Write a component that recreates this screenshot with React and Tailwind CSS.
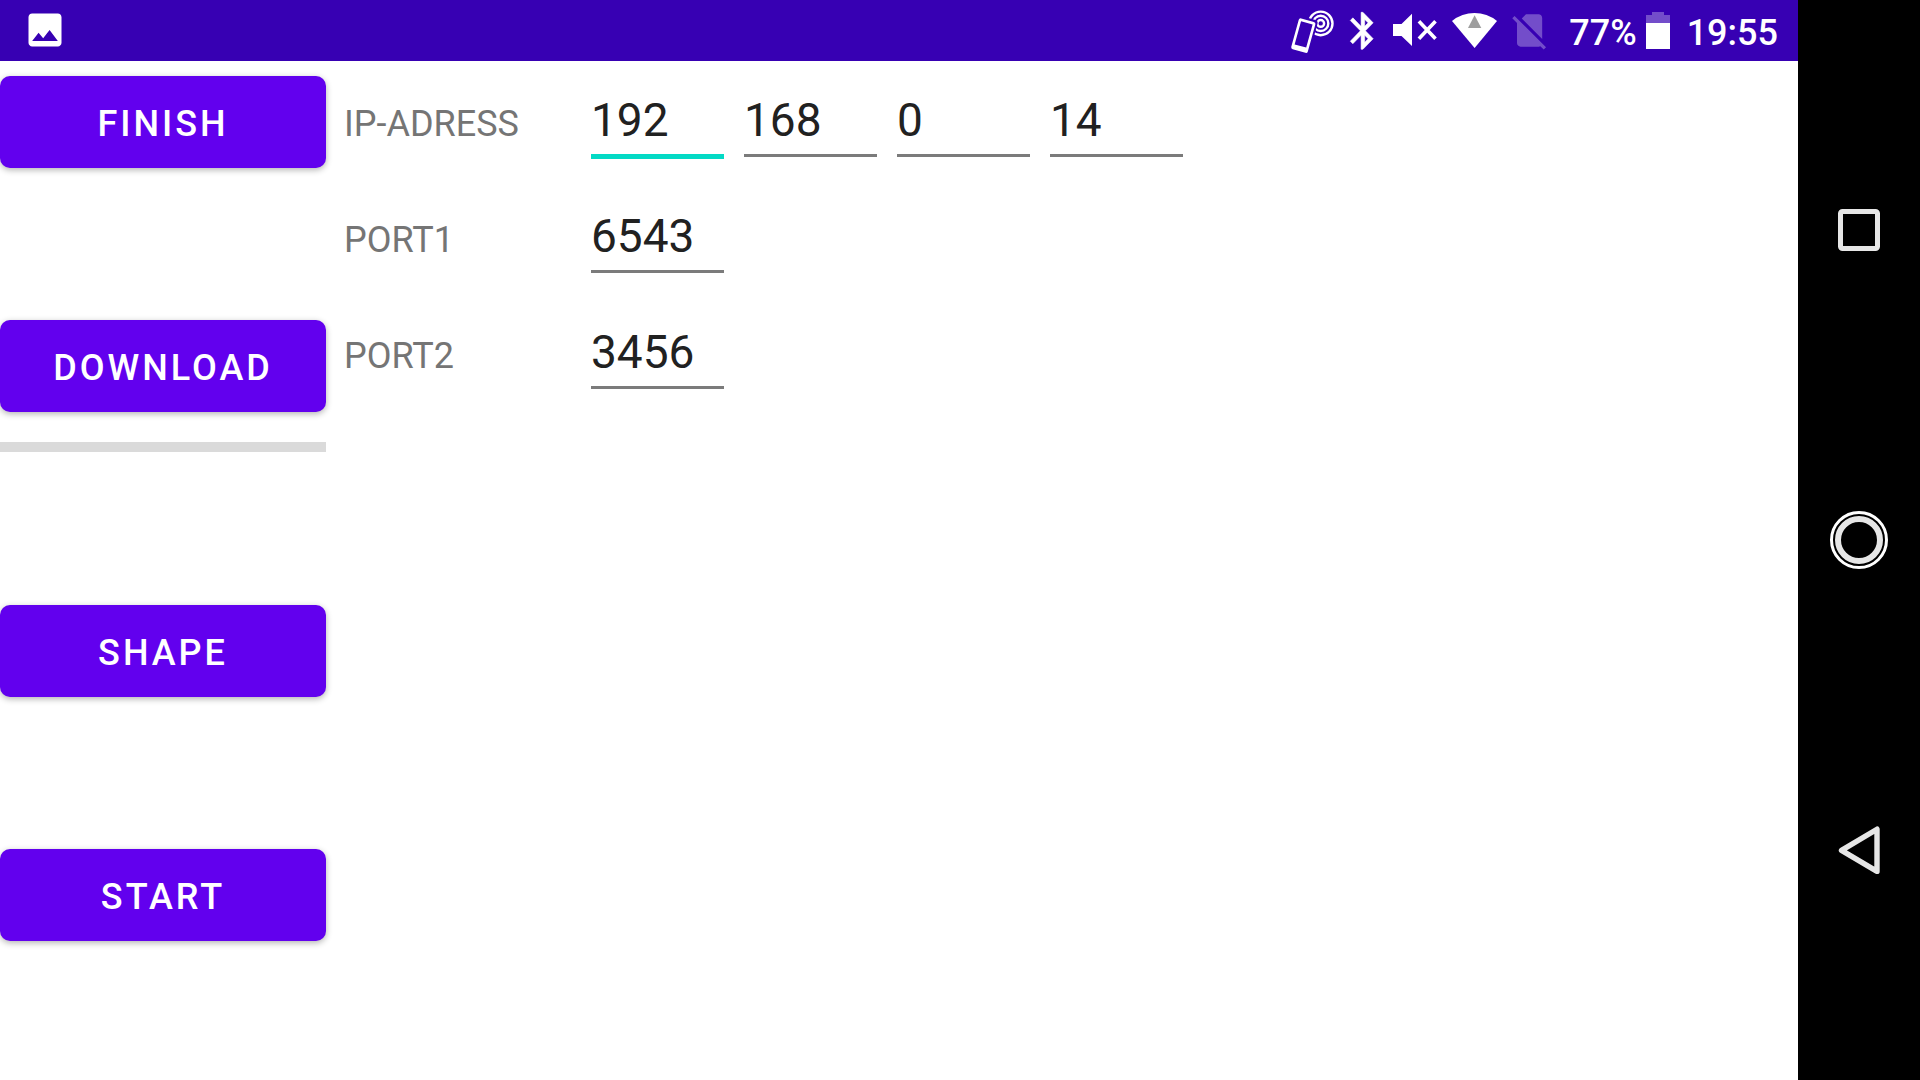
import React, { useState } from "react";

function StatusIcon({ className, children }) {
  return (
    <svg
      aria-hidden="true"
      fill="currentColor"
      className={`h-12 shrink-0 ${className}`}
    >
      {children}
    </svg>
  );
}

function StatusBar() {
  return (
    <header className="flex h-[61px] items-start bg-[#3700b3] pt-[6px] pr-5 pl-[23px] text-white">
      <svg
        aria-hidden="true"
        viewBox="0 0 24 24"
        fill="currentColor"
        className="mt-[2px] size-[44px]"
      >
        <path d="M21 19V5c0-1.1-.9-2-2-2H5c-1.1 0-2 .9-2 2v14c0 1.1.9 2 2 2h14c1.1 0 2-.9 2-2zM8.5 13.5l2.5 3.01L14.5 12l4.5 6H5l3.5-4.5z" />
      </svg>

      <div className="ml-auto flex items-start gap-3">
        {/* Phone with NFC waves */}
        <StatusIcon className="w-12">
          <g fill="none" stroke="currentColor" strokeWidth="2.4">
            <circle cx="31.7" cy="17.4" r="11.8" />
            <circle cx="31.7" cy="17.4" r="7.6" />
            <circle cx="31.7" cy="17.4" r="3.4" />
          </g>
          <g transform="rotate(15.5 14.3 29.6)">
            <rect x="4" y="11.4" width="20.8" height="36" rx="3" fill="#3700b3" />
            <path
              fillRule="evenodd"
              d="M7.7 13.6h13.2a2 2 0 0 1 2 2v28a2 2 0 0 1-2 2H7.7a2 2 0 0 1-2-2v-28a2 2 0 0 1 2-2zM8.3 16.4v24h12v-24z"
            />
          </g>
        </StatusIcon>
        {/* Bluetooth */}
        <StatusIcon className="w-[30px]">
          <path
            transform="translate(-7.7 2.6) scale(1.8 1.85)"
            d="M17.71 7.71L12 2h-1v7.59L6.41 5 5 6.41 10.59 12 5 17.59 6.41 19 11 14.41V22h1l5.71-5.71-4.3-4.29 4.3-4.29zM13 5.83l1.88 1.88L13 9.59V5.83zm1.88 10.46L13 18.17v-3.76l1.88 1.88z"
            stroke="currentColor"
            strokeWidth="0.3"
          />
        </StatusIcon>
        {/* Muted */}
        <StatusIcon className="w-12">
          <path d="M2 18h8.5L21 7.7V40L10.5 30H2z" />
          <path
            d="M27.9 15.2l16.6 17.6M44.5 15.2L27.9 32.8"
            stroke="currentColor"
            strokeWidth="3.6"
          />
        </StatusIcon>
        {/* Wi-Fi */}
        <StatusIcon className="w-12">
          <path d="M23.6 42L1 15a35.6 35.6 0 0 1 45 0z" />
          <path d="M23.6 9.3L17 22h13.3z" fill="#9e9e9e" />
        </StatusIcon>
        {/* No SIM */}
        <StatusIcon className="w-9 opacity-30">
          <path
            transform="translate(-3 2.9) scale(1.8)"
            d="M18.99 5c0-1.1-.89-2-1.99-2h-7L7.66 5.34 19 16.68 18.99 5zM3.65 3.88L2.38 5.15 5 7.77V19c0 1.1.9 2 2 2h10.01c.35 0 .67-.1.96-.26l1.88 1.88 1.27-1.27L3.65 3.88z"
          />
        </StatusIcon>

        <span className="ml-[10px] pt-[5px] text-[36px] leading-[44px] font-medium">
          77%
        </span>
        {/* Battery */}
        <StatusIcon className="-ml-[3px] w-6">
          <path d="M6 6h12v3h6v8H0V9h6z" opacity="0.3" />
          <path d="M0 17h24v26H0z" />
        </StatusIcon>
        <span className="ml-[5px] pt-[5px] text-[36px] leading-[44px] font-medium">
          19:55
        </span>
      </div>
    </header>
  );
}

function ActionButton({ children }) {
  return (
    <button
      type="button"
      className="h-[92px] w-full rounded-[10px] bg-[#6200ee] pt-1 text-[36px] font-medium tracking-[3px] text-white uppercase shadow-[0_2px_6px_rgba(0,0,0,0.3)]"
    >
      {children}
    </button>
  );
}

function NumberField({ label, id, value, autoFocus }) {
  const [text, setText] = useState(value);

  return (
    <input
      id={id}
      aria-label={label}
      inputMode="numeric"
      value={text}
      onChange={(e) => setText(e.target.value)}
      className={`w-[133px] pt-8 pb-[7px] text-[46px] leading-[54px] text-[#212121] outline-none ${
        autoFocus
          ? "border-b-5 border-[#03dac5]"
          : "border-b-3 border-[#7b7b7b] focus:border-[#03dac5]"
      }`}
    />
  );
}

function FieldRow({ label, htmlFor, children }) {
  return (
    <div className="flex h-[116px] items-baseline">
      <label
        htmlFor={htmlFor}
        className="w-[247px] text-[36px] leading-[42px] text-[#757575]"
      >
        {label}
      </label>
      <div className="flex items-baseline gap-5">{children}</div>
    </div>
  );
}

function NavButton({ label, children }) {
  return (
    <button
      type="button"
      aria-label={label}
      className="flex h-[310px] w-full items-center justify-center"
    >
      <svg
        aria-hidden="true"
        viewBox="0 0 64 64"
        fill="none"
        stroke="#e6e6e6"
        className="size-16"
      >
        {children}
      </svg>
    </button>
  );
}

export default function App() {
  return (
    <div className="flex min-h-screen bg-white font-[Roboto,sans-serif]">
      <div className="flex flex-1 flex-col">
        <StatusBar />
        <main className="flex flex-1">
          <aside className="w-[326px] pt-[15px]">
            <ActionButton>Finish</ActionButton>
            <div className="mt-[152px]">
              <ActionButton>Download</ActionButton>
            </div>
            <div
              role="progressbar"
              aria-label="Download progress"
              aria-valuenow={0}
              className="mt-[30px] h-[10px] bg-[#dadada]"
            />
            <div className="mt-[153px] flex flex-col gap-[152px]">
              <ActionButton>Shape</ActionButton>
              <ActionButton>Start</ActionButton>
            </div>
          </aside>

          <form className="ml-[18px] flex-1">
            <FieldRow label="IP-ADRESS" htmlFor="ip-1">
              <NumberField id="ip-1" label="IP part 1" value="192" autoFocus />
              <NumberField id="ip-2" label="IP part 2" value="168" />
              <NumberField id="ip-3" label="IP part 3" value="0" />
              <NumberField id="ip-4" label="IP part 4" value="14" />
            </FieldRow>
            <FieldRow label="PORT1" htmlFor="port-1">
              <NumberField id="port-1" label="PORT1" value="6543" />
            </FieldRow>
            <FieldRow label="PORT2" htmlFor="port-2">
              <NumberField id="port-2" label="PORT2" value="3456" />
            </FieldRow>
          </form>
        </main>
      </div>

      <nav className="flex w-[122px] flex-col justify-center bg-black">
        <NavButton label="Recent apps">
          <rect x="13.5" y="13.5" width="37" height="37" rx="2" strokeWidth="5" />
        </NavButton>
        <NavButton label="Home">
          <circle cx="32" cy="32" r="27.5" stroke="#ffffff" strokeWidth="3" />
          <circle cx="32" cy="32" r="21" strokeWidth="6" />
        </NavButton>
        <NavButton label="Back">
          <path
            d="M14.5 32.4L50 11.2V53.4z"
            strokeWidth="5.4"
            strokeLinejoin="round"
          />
        </NavButton>
      </nav>
    </div>
  );
}
